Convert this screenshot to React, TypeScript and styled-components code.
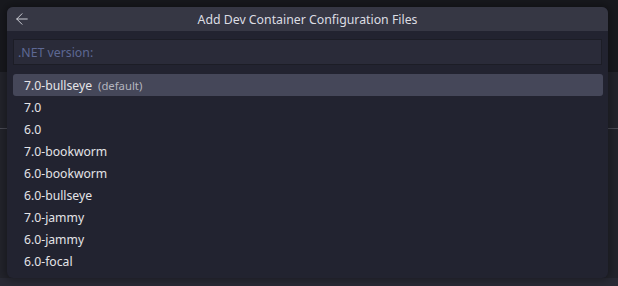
import styled, { createGlobalStyle } from 'styled-components';
import { ArrowLeft } from 'lucide-react';

const GlobalStyle = createGlobalStyle`
  html, body {
    margin: 0;
    padding: 0;
    background: #23242c;
    font-family: "Noto Sans", "Open Sans", sans-serif;
  }
`;

const Backdrop = styled.div`
  position: relative;
  width: 618px;
  height: 286px;
  overflow: hidden;
  display: flex;
  flex-direction: column;
  background: #23242c;
`;

const TopStrip = styled.div`
  height: 72px;
  background: #18191e;
`;

const EditorArea = styled.div`
  flex: 1;
  padding-top: 56px;
`;

const Divider = styled.div`
  height: 1px;
  background: #4a4b55;
`;

const BottomStrip = styled.div`
  height: 8px;
  background: #292a35;
`;

const Dialog = styled.div`
  position: absolute;
  left: 7px;
  top: 7px;
  width: 601px;
  height: 271px;
  border-radius: 6px;
  overflow: hidden;
  background: #222330;
  box-shadow: 0 0 8px 2px rgba(0, 0, 0, 0.35);
  display: flex;
  flex-direction: column;
`;

const TitleBar = styled.div`
  height: 24px;
  background: #363744;
  display: flex;
  align-items: center;
  color: #dcdde3;
  font-size: 12.3px;
`;

const BackButton = styled.div`
  width: 24px;
  height: 24px;
  display: flex;
  align-items: center;
  justify-content: center;
  margin-left: 3px;
  color: #d0d1d8;
`;

const Title = styled.div`
  flex: 1;
  text-align: center;
  margin-right: 27px;
`;

const Body = styled.div`
  padding: 8px 6px 6px 6px;
  display: flex;
  flex-direction: column;
  gap: 9px;
`;

const Input = styled.div`
  height: 26px;
  box-sizing: border-box;
  border: 1px solid #1c1d26;
  background: #2a2b39;
  padding-left: 4px;
  display: flex;
  align-items: center;
  color: #5d6894;
  font-size: 12.3px;
`;

const List = styled.div`
  display: flex;
  flex-direction: column;
  margin-right: -1px;
`;

const Row = styled.div<{ $selected?: boolean }>`
  height: 22px;
  display: flex;
  align-items: center;
  padding-left: 11px;
  border-radius: 3px;
  font-size: 12.2px;
  color: #e4e4e8;
  background: ${(p) => (p.$selected ? '#454759' : 'transparent')};
`;

const Hint = styled.span`
  margin-left: 6px;
  font-size: 11.3px;
  color: #b4b5bf;
`;

const items = [
  '7.0-bullseye',
  '7.0',
  '6.0',
  '7.0-bookworm',
  '6.0-bookworm',
  '6.0-bullseye',
  '7.0-jammy',
  '6.0-jammy',
  '6.0-focal',
];

export default function App() {
  return (
    <>
      <GlobalStyle />
      <Backdrop>
        <TopStrip />
        <EditorArea>
          <Divider />
        </EditorArea>
        <BottomStrip />
        <Dialog>
          <TitleBar>
            <BackButton>
              <ArrowLeft size={18} strokeWidth={1.3} />
            </BackButton>
            <Title>Add Dev Container Configuration Files</Title>
          </TitleBar>
          <Body>
            <Input>.NET version:</Input>
            <List>
              {items.map((it, i) => (
                <Row key={it} $selected={i === 0}>
                  {it}
                  {i === 0 && <Hint>(default)</Hint>}
                </Row>
              ))}
            </List>
          </Body>
        </Dialog>
      </Backdrop>
    </>
  );
}
